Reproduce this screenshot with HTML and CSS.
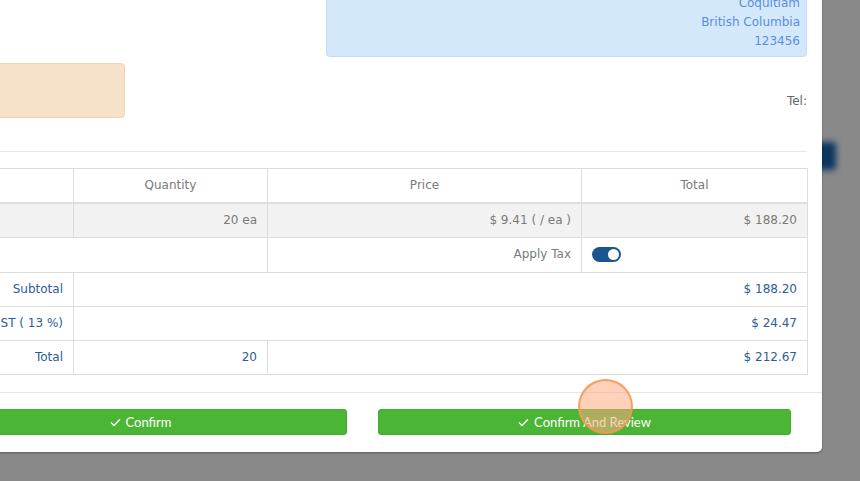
FILE: index.html
```html
<!DOCTYPE html>
<html lang="en">
<head>
  <meta charset="UTF-8">
  <title>Purchase Order</title>
  <link rel="stylesheet" href="styles.css">
</head>
<body>
  <div class="page-btn"></div>

  <div class="modal">
    <div class="modal-body">
      <div class="parties">
        <div class="party-from">
          <div class="from-box"></div>
        </div>
        <div class="party-to">
          <div class="to-box">
            <div>Coquitlam</div>
            <div>British Columbia</div>
            <div>123456</div>
          </div>
          <div class="tel">Tel:</div>
        </div>
      </div>

      <hr class="divider">

      <table class="items">
        <colgroup>
          <col class="c-item">
          <col class="c-qty">
          <col class="c-price">
          <col class="c-total">
        </colgroup>
        <thead>
          <tr>
            <th></th>
            <th>Quantity</th>
            <th>Price</th>
            <th>Total</th>
          </tr>
        </thead>
        <tbody>
          <tr class="line">
            <td></td>
            <td class="num">20 ea</td>
            <td class="num">$ 9.41 ( / ea )</td>
            <td class="num">$ 188.20</td>
          </tr>
          <tr class="tax-row">
            <td colspan="2"></td>
            <td class="num">Apply Tax</td>
            <td><span class="toggle on"><span class="knob"></span></span></td>
          </tr>
          <tr class="sum">
            <td class="num">Subtotal</td>
            <td colspan="3" class="num">$ 188.20</td>
          </tr>
          <tr class="sum">
            <td class="num">HST ( 13 %)</td>
            <td colspan="3" class="num">$ 24.47</td>
          </tr>
          <tr class="sum">
            <td class="num">Total</td>
            <td class="num">20</td>
            <td colspan="2" class="num">$ 212.67</td>
          </tr>
        </tbody>
      </table>
    </div>

    <div class="modal-footer">
      <button class="btn-confirm">
        <svg width="11" height="9" viewBox="0 0 11 9"><path d="M1 4.6 L4 7.6 L10 1.2" fill="none" stroke="#fff" stroke-width="1.4"/></svg>
        Confirm
      </button>
      <button class="btn-confirm">
        <svg width="11" height="9" viewBox="0 0 11 9"><path d="M1 4.6 L4 7.6 L10 1.2" fill="none" stroke="#fff" stroke-width="1.4"/></svg>
        Confirm And Review
      </button>
    </div>
  </div>

  <div class="click-dot"></div>
</body>
</html>
```

FILE: styles.css
```css
html, body {
  margin: 0;
  padding: 0;
  height: 100%;
  overflow: hidden;
  background-color: #898989;
  font-family: 'DejaVu Sans', Verdana, sans-serif;
  font-size: 12px;
  color: #7a7a7a;
}

.page-btn {
  position: absolute;
  left: 814px;
  top: 142px;
  width: 22px;
  height: 28px;
  border-radius: 4px;
  background-color: #0c3560;
  filter: blur(3px);
}

.modal {
  position: relative;
  width: 1000px;
  margin: -66px 0 0 -178px;
  background-color: #ffffff;
  border-radius: 0 0 5px 5px;
  box-shadow: 0 1px 2px rgba(0, 0, 0, 0.35);
}

.modal-body {
  padding: 15px 15px 17px 15px;
}

/* addresses */
.parties {
  display: flex;
  justify-content: space-between;
}

.party-from {
  width: 288px;
}

.from-box {
  margin-top: 114px;
  height: 53px;
  background-color: #f5e2c9;
  border: 1px solid #f1d6b3;
  border-radius: 4px;
}

.party-to {
  width: 481px;
}

.to-box {
  padding: 44px 6px 5px 6px;
  background-color: #d4e8fc;
  border: 1px solid #c3dbf3;
  border-radius: 4px;
  text-align: right;
  line-height: 19px;
  color: #5a8ede;
}

.tel {
  margin-top: 35px;
  text-align: right;
  line-height: 19px;
  color: #666666;
}

.divider {
  margin: 33px 0 16px 0;
  border: 0;
  border-top: 1px solid #e6e6e6;
}

/* items table */
.items {
  width: 970px;
  table-layout: fixed;
  border-collapse: collapse;
}

.c-item { width: 236px; }
.c-qty { width: 194px; }
.c-price { width: 314px; }
.c-total { width: 226px; }

.items th,
.items td {
  border: 1px solid #dddddd;
  padding: 8px 10px 8px 10px;
  line-height: 17px;
  font-weight: normal;
  white-space: nowrap;
}

.items th {
  text-align: center;
  color: #7a7a7a;
  border-bottom: 2px solid #dddddd;
}

.items td.num {
  text-align: right;
}

.line td {
  background-color: #f2f2f2;
}

.tax-row td {
  padding-bottom: 9px;
}

.sum td {
  color: #2d5d95;
}

.toggle {
  display: inline-block;
  vertical-align: middle;
  position: relative;
  width: 29px;
  height: 15px;
  border-radius: 8px;
  background-color: #1b5591;
}

.toggle .knob {
  position: absolute;
  top: 2px;
  right: 2px;
  width: 11px;
  height: 11px;
  border-radius: 50%;
  background-color: #ffffff;
}

/* footer */
.modal-footer {
  display: flex;
  justify-content: flex-end;
  gap: 31px;
  padding: 16px 31px 17px 15px;
  border-top: 1px solid #e6e6e6;
}

.btn-confirm {
  width: 413px;
  height: 26px;
  padding: 0;
  border: 1px solid #45ab30;
  border-radius: 3px;
  background-color: #4bb535;
  color: #ffffff;
  font-family: 'Lato', sans-serif;
  font-size: 13px;
  display: flex;
  align-items: center;
  justify-content: center;
  gap: 5px;
}

.click-dot {
  position: absolute;
  left: 578px;
  top: 379px;
  width: 51px;
  height: 51px;
  border-radius: 50%;
  border: 2px solid rgba(246, 150, 80, 0.85);
  background-color: rgba(255, 170, 130, 0.55);
}
```
